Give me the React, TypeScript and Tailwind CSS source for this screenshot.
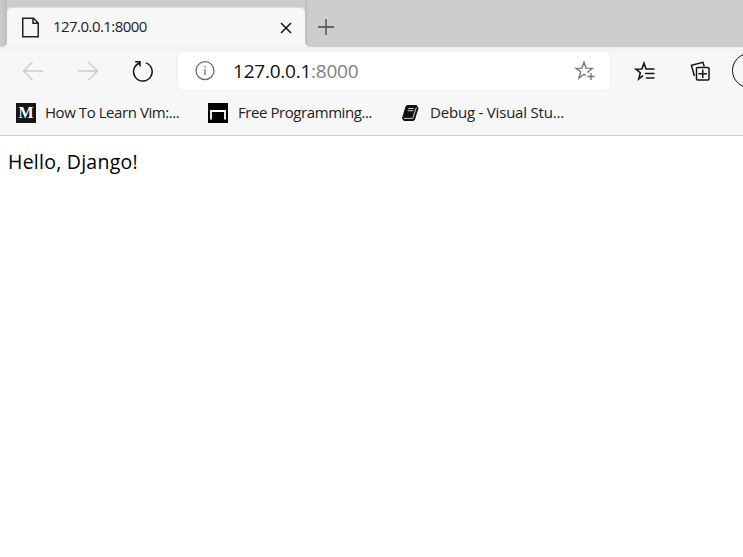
import type { ReactNode } from "react";

function Tabs() {
  return (
    <div className="flex h-[47px] bg-linear-to-b from-[#cdcdcd] from-60% to-[#f7f7f7] to-60%">
      <div className="w-[7px] shrink-0 rounded-br-[5px] bg-linear-to-r from-[#cdcdcd] to-[#bebebe]" />
      <div className="mt-[7px] flex w-[298px] shrink-0 items-center rounded-t-[5px] border-t border-[#dedede] bg-[#f7f7f7]">
        <svg className="ml-[14px] h-[22px] w-5 shrink-0" viewBox="0 0 20 22" fill="none" stroke="#222" strokeWidth="1.5">
          <path d="M1.75 1.25H12.5L17.25 6V19.75H1.75ZM12 1.25V6.25H17" />
        </svg>
        <span className="ml-[12px] -mt-[2px] text-[15px] tracking-[-0.55px] text-[#222]">127.0.0.1:8000</span>
        <svg className="mr-[12px] ml-auto h-3.5 w-3.5 shrink-0" viewBox="0 0 14 14" stroke="#111" strokeWidth="1.5">
          <path d="M2 2 12 12M12 2 2 12" />
        </svg>
      </div>
      <div className="flex flex-1 items-center rounded-bl-[5px] bg-linear-to-r from-[#bebebe] to-[#cdcdcd] to-[4px]">
        <svg className="ml-[12px] mt-[6px] h-[18px] w-[18px]" viewBox="0 0 18 18" stroke="#454545" strokeWidth="1.3">
          <path d="M1 9H17M9 1V17" />
        </svg>
      </div>
    </div>
  );
}

function Toolbar() {
  return (
    <div className="flex h-[47px] items-center overflow-hidden bg-linear-to-b from-[#f0f0f0] to-[#f7f7f7] to-[4px]">
      <svg className="ml-[22px] h-5 w-[22px] shrink-0" viewBox="0 0 22 20" fill="none" stroke="#cbcbcb" strokeWidth="1.3">
        <path d="M21 10H1.5M10.5 1 1.5 10 10.5 19" />
      </svg>
      <svg className="ml-[33px] h-5 w-[22px] shrink-0" viewBox="0 0 22 20" fill="none" stroke="#cbcbcb" strokeWidth="1.3">
        <path d="M1 10H20.5M11.5 1 20.5 10 11.5 19" />
      </svg>
      <svg className="ml-[33px] h-[22px] w-[24px] shrink-0" viewBox="0 0 24 22" fill="none" stroke="#151515" strokeWidth="1.5">
        <path d="M7.6 3A9.3 9.3 0 1 0 13.8 2.9M3.2 1.7H8V6.5M8 2 6 4.4" />
      </svg>
      <div className="ml-[22px] flex h-[38px] w-[432px] shrink-0 items-center rounded-[5px] bg-white shadow-[0_0_3px_#e2e2e2]">
        <svg className="ml-[17px] h-5 w-5 shrink-0" viewBox="0 0 20 20" fill="none" stroke="#6b6b6b" strokeWidth="1.3">
          <circle cx="10" cy="9.7" r="9" />
          <path d="M10 8.2V14M10 5V6.5" />
        </svg>
        <span className="ml-[18px] mt-px text-[19px] tracking-[-0.23px] whitespace-nowrap text-[#111]">
          127.0.0.1<span className="text-[#808080]">:8000</span>
        </span>
        <svg className="mr-[14px] ml-auto h-[21px] w-[22px] shrink-0" viewBox="0 0 22 21" fill="none" stroke="#777" strokeWidth="1.4">
          <path d="M11.8 15.5 9.9 14.3 5 18.1 6.7 11.8 1.9 8.3 7.9 8.1 10 2.3 12.1 8.1 18.4 8.3 14 11.7 14.4 13M17 13V20M13.5 16.5H20.5" />
        </svg>
      </div>
      <svg className="ml-[24px] h-[22px] w-[22px] shrink-0" viewBox="0 0 22 22" fill="none" stroke="#151515" strokeWidth="1.6">
        <path d="M9 15.6 4.8 19 6.3 12.7 1.8 9.2 7.8 9 10 3.2 12 9H20.5M11 13.5H20.5M12 18H20.5" />
      </svg>
      <svg className="ml-[34px] h-[22px] w-[22px] shrink-0" viewBox="0 0 22 22" fill="none" stroke="#151515" strokeWidth="1.5">
        <rect x="6.5" y="7.5" width="12.5" height="12.5" rx="1" />
        <path d="M12.75 9.5V18M8.5 13.75H17M4.4 16 1.4 5.3 13 2.3 14.2 6.5" />
      </svg>
      <span className="ml-[20px] h-[35px] w-[35px] shrink-0 rounded-full border-[1.5px] border-[#111]" />
    </div>
  );
}

function Bookmark({ icon, className, children }: { icon: ReactNode; className: string; children: ReactNode }) {
  return (
    <div className={`flex shrink-0 items-center ${className}`}>
      {icon}
      <span className="-mt-px text-[15px] whitespace-nowrap text-[#222]">{children}</span>
    </div>
  );
}

function Bookmarks() {
  return (
    <div className="flex h-[42px] border-b border-[#cfcfcf] bg-[#f7f7f7] pb-[3px] pl-4">
      <Bookmark
        className="w-[192px] gap-[9px] tracking-[-0.44px]"
        icon={
          <span className="flex h-5 w-5 items-center justify-center bg-[#161616] font-['Liberation_Serif',serif] text-[16px] font-bold tracking-normal text-white">
            M
          </span>
        }
      >
        How To Learn Vim:...
      </Bookmark>
      <Bookmark
        className="w-[192px] gap-[10px] tracking-[-0.43px]"
        icon={
          <svg className="h-5 w-5" viewBox="0 0 20 20" fill="none" stroke="white" strokeWidth="1.8">
            <path d="M0 0H20V20H0Z" fill="#000" stroke="none" />
            <path d="M3 16.5V8H17V16.5" />
          </svg>
        }
      >
        Free Programming...
      </Bookmark>
      <Bookmark
        className="gap-[10px] tracking-[-0.2px]"
        icon={
          <svg className="h-5 w-5" viewBox="0 0 20 20">
            <path d="M7 2H16.5L18.6 5 15 16.5 13.5 18H4L2 15.5 5.3 4Z" fill="#111" />
            <path d="M8.2 5.5H13.8M7.7 7.7H13.2M4 15.4H12.8L16.3 4.5" fill="none" stroke="#ccc" strokeWidth="1" />
          </svg>
        }
      >
        Debug - Visual Stu...
      </Bookmark>
    </div>
  );
}

export default function App() {
  return (
    <div className="h-[557px] w-full overflow-hidden bg-white font-['Open_Sans','Noto_Sans',sans-serif]">
      <Tabs />
      <Toolbar />
      <Bookmarks />
      <main className="px-2 pt-3 text-[19.5px] leading-[28px] tracking-[0.25px] text-black">Hello, Django!</main>
    </div>
  );
}
